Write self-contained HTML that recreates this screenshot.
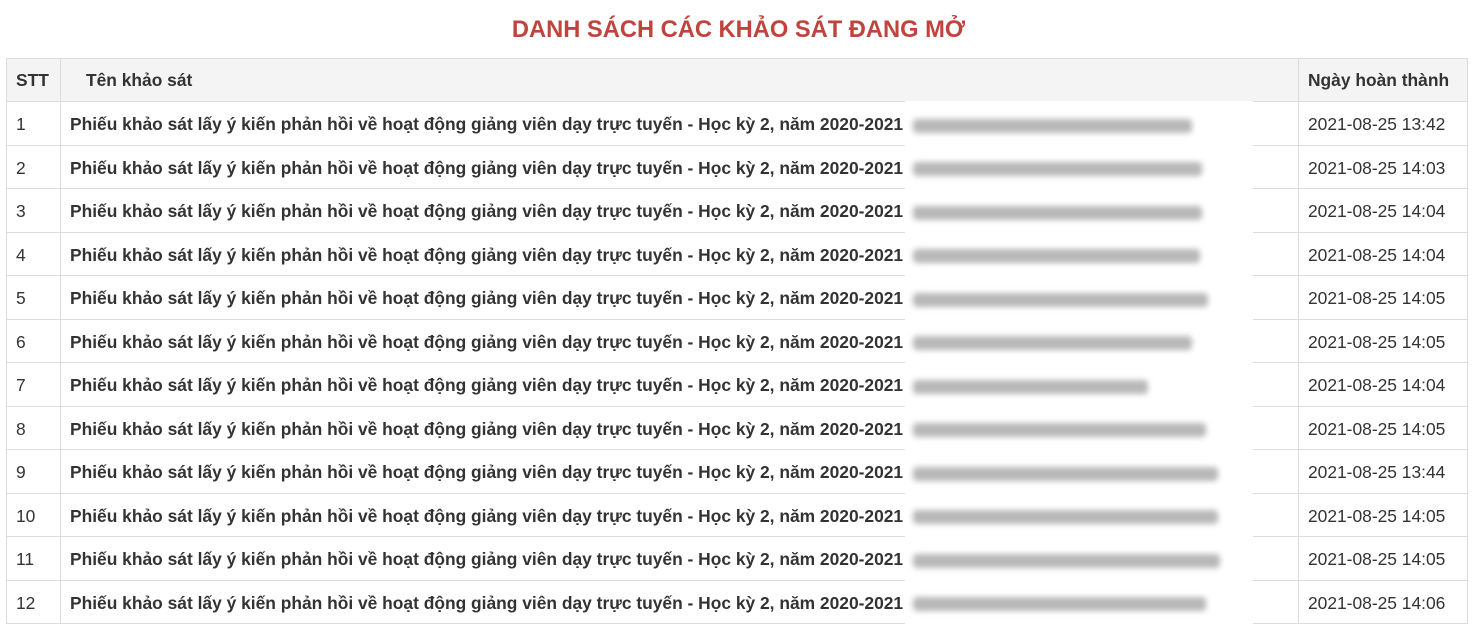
<!DOCTYPE html>
<html><head><meta charset="utf-8"><style>
body{margin:0;background:#fff;font-family:"Liberation Sans",Arial,sans-serif;color:#333;width:1477px;height:628px;overflow:hidden;position:relative}
h1{position:absolute;top:16px;left:0;width:1477px;text-align:center;margin:0;font-size:23.7px;font-weight:bold;color:#c0443d;line-height:28px}
.tbl{position:absolute;left:6px;top:58px;width:1461px;border-top:1px solid #ddd;border-left:1px solid #ddd}
.r{display:flex;height:43.5px;box-sizing:border-box;border-bottom:1px solid #ddd;font-size:17.4px}
.h{background:#f4f4f4;height:43px;font-weight:bold}
.c1,.c2,.c3{box-sizing:border-box;border-right:1px solid #ddd;height:100%;display:flex;align-items:center;padding-left:9px;padding-top:3px}
.h .c1,.h .c2,.h .c3{padding-top:0}
.c1{width:54px}
.c2{width:1238px;font-weight:bold;white-space:nowrap}
.h .c2{padding-left:25px}
.c3{width:169px}
.blur{position:absolute;left:905px;top:101px;width:348px;height:527px;background:#fff}
.b{position:absolute;left:8px;height:14px;background:#b8b8b8;filter:blur(3px);border-radius:4px}
</style></head><body>
<h1>DANH SÁCH CÁC KHẢO SÁT ĐANG MỞ</h1>
<div class="tbl">
<div class="r h"><div class="c1">STT</div><div class="c2">Tên khảo sát</div><div class="c3">Ngày hoàn thành</div></div>
<div class="r"><div class="c1">1</div><div class="c2">Phiếu khảo sát lấy ý kiến phản hồi về hoạt động giảng viên dạy trực tuyến - Học kỳ 2, năm 2020-2021</div><div class="c3">2021-08-25 13:42</div></div>
<div class="r"><div class="c1">2</div><div class="c2">Phiếu khảo sát lấy ý kiến phản hồi về hoạt động giảng viên dạy trực tuyến - Học kỳ 2, năm 2020-2021</div><div class="c3">2021-08-25 14:03</div></div>
<div class="r"><div class="c1">3</div><div class="c2">Phiếu khảo sát lấy ý kiến phản hồi về hoạt động giảng viên dạy trực tuyến - Học kỳ 2, năm 2020-2021</div><div class="c3">2021-08-25 14:04</div></div>
<div class="r"><div class="c1">4</div><div class="c2">Phiếu khảo sát lấy ý kiến phản hồi về hoạt động giảng viên dạy trực tuyến - Học kỳ 2, năm 2020-2021</div><div class="c3">2021-08-25 14:04</div></div>
<div class="r"><div class="c1">5</div><div class="c2">Phiếu khảo sát lấy ý kiến phản hồi về hoạt động giảng viên dạy trực tuyến - Học kỳ 2, năm 2020-2021</div><div class="c3">2021-08-25 14:05</div></div>
<div class="r"><div class="c1">6</div><div class="c2">Phiếu khảo sát lấy ý kiến phản hồi về hoạt động giảng viên dạy trực tuyến - Học kỳ 2, năm 2020-2021</div><div class="c3">2021-08-25 14:05</div></div>
<div class="r"><div class="c1">7</div><div class="c2">Phiếu khảo sát lấy ý kiến phản hồi về hoạt động giảng viên dạy trực tuyến - Học kỳ 2, năm 2020-2021</div><div class="c3">2021-08-25 14:04</div></div>
<div class="r"><div class="c1">8</div><div class="c2">Phiếu khảo sát lấy ý kiến phản hồi về hoạt động giảng viên dạy trực tuyến - Học kỳ 2, năm 2020-2021</div><div class="c3">2021-08-25 14:05</div></div>
<div class="r"><div class="c1">9</div><div class="c2">Phiếu khảo sát lấy ý kiến phản hồi về hoạt động giảng viên dạy trực tuyến - Học kỳ 2, năm 2020-2021</div><div class="c3">2021-08-25 13:44</div></div>
<div class="r"><div class="c1">10</div><div class="c2">Phiếu khảo sát lấy ý kiến phản hồi về hoạt động giảng viên dạy trực tuyến - Học kỳ 2, năm 2020-2021</div><div class="c3">2021-08-25 14:05</div></div>
<div class="r"><div class="c1">11</div><div class="c2">Phiếu khảo sát lấy ý kiến phản hồi về hoạt động giảng viên dạy trực tuyến - Học kỳ 2, năm 2020-2021</div><div class="c3">2021-08-25 14:05</div></div>
<div class="r"><div class="c1">12</div><div class="c2">Phiếu khảo sát lấy ý kiến phản hồi về hoạt động giảng viên dạy trực tuyến - Học kỳ 2, năm 2020-2021</div><div class="c3">2021-08-25 14:06</div></div>
</div>
<div class="blur">
<div class="b" style="top:18px;width:279px"></div>
<div class="b" style="top:61px;width:289px"></div>
<div class="b" style="top:105px;width:289px"></div>
<div class="b" style="top:148px;width:287px"></div>
<div class="b" style="top:192px;width:295px"></div>
<div class="b" style="top:235px;width:279px"></div>
<div class="b" style="top:279px;width:235px"></div>
<div class="b" style="top:322px;width:293px"></div>
<div class="b" style="top:366px;width:305px"></div>
<div class="b" style="top:409px;width:305px"></div>
<div class="b" style="top:453px;width:307px"></div>
<div class="b" style="top:496px;width:293px"></div>
</div>
</body></html>
